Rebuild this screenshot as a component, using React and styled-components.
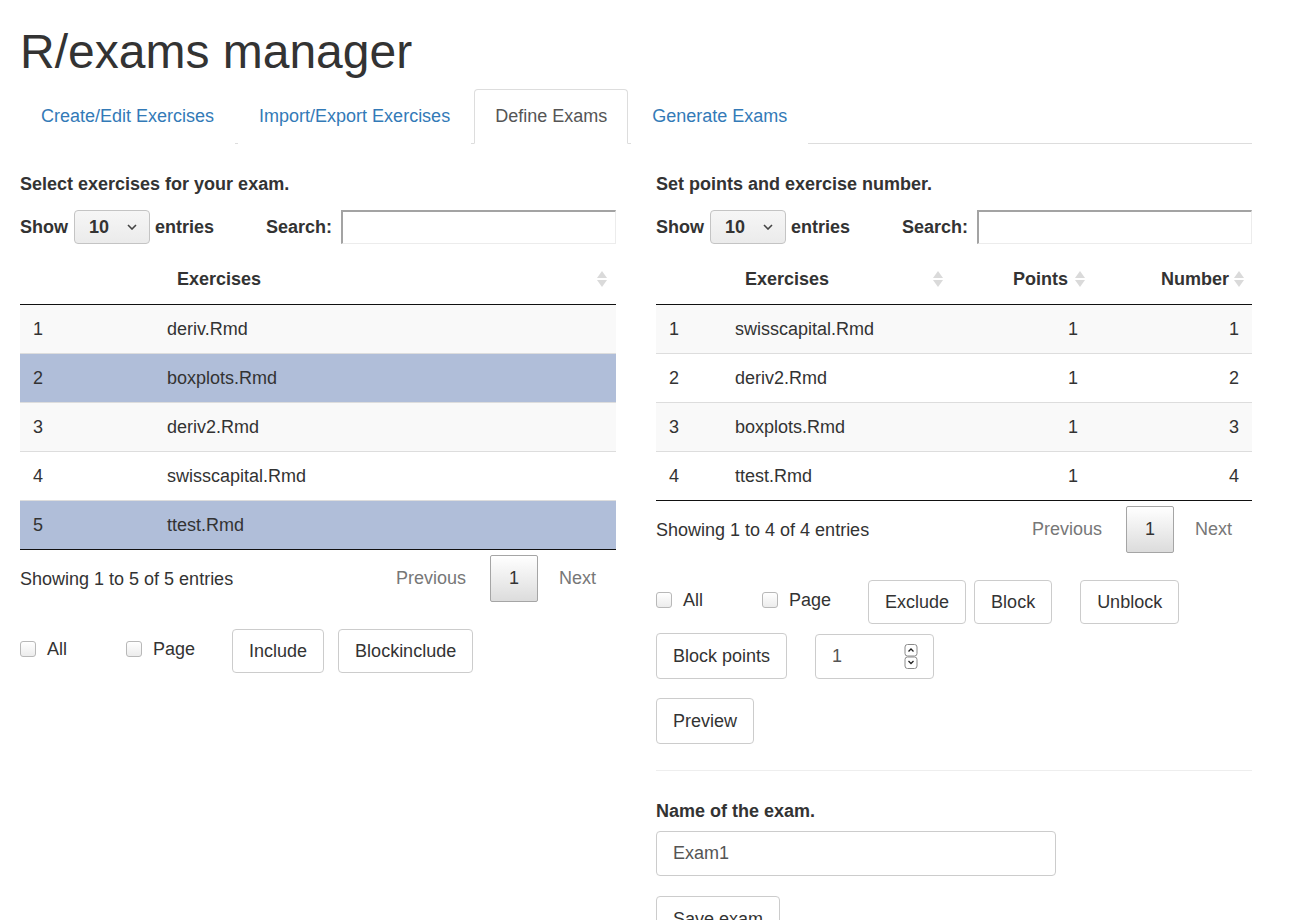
import React from "react";
import styled, { createGlobalStyle } from "styled-components";

const Global = createGlobalStyle`
  html, body { margin: 0; padding: 0; background: #fff; }
  body {
    font-family: "Liberation Sans", Arial, Helvetica, sans-serif;
    font-size: 18px;
    line-height: 26px;
    color: #333;
  }
  * { box-sizing: border-box; }
`;

const Page = styled.div`
  width: 1232px;
  margin-left: 20px;
`;

const Title = styled.h1`
  font-size: 48px;
  font-weight: 400;
  line-height: 53px;
  margin: 25px 0 11px;
  color: #333;
`;

const TabBar = styled.ul`
  display: flex;
  list-style: none;
  margin: 0;
  padding: 0;
  border-bottom: 1px solid #ddd;
`;

const Tab = styled.li`
  margin-right: 3px;
  margin-bottom: -1px;
`;

const TabLink = styled.a`
  display: block;
  padding: 13px 20px 14px;
  line-height: 26px;
  border: 1px solid ${(p) => (p.$active ? "#ddd" : "transparent")};
  border-bottom-color: ${(p) => (p.$active ? "#fff" : "transparent")};
  border-radius: 4px 4px 0 0;
  background: #fff;
  color: ${(p) => (p.$active ? "#555" : "#337ab7")};
  text-decoration: none;
  cursor: pointer;
`;

const Columns = styled.div`
  display: grid;
  grid-template-columns: 596px 596px;
  column-gap: 40px;
  padding-top: 27px;
  align-items: start;
`;

const Column = styled.div`
  display: flex;
  flex-direction: column;
`;

const Label = styled.div`
  font-weight: 700;
  line-height: 26px;
  margin-top: ${(p) => p.$mt || 0}px;
  margin-bottom: ${(p) => p.$mb || 13}px;
`;

const Controls = styled.div`
  display: flex;
  justify-content: space-between;
  align-items: center;
  height: 34px;
  font-weight: 700;
`;

const LengthGroup = styled.div`
  display: flex;
  align-items: center;
`;

const SelectWrap = styled.div`
  position: relative;
  margin: 0 5px 0 6px;
`;

const Select = styled.select`
  appearance: none;
  width: 76px;
  height: 34px;
  padding: 0 0 0 14px;
  border: 1px solid #c4c4c4;
  border-radius: 4px;
  background: linear-gradient(#f6f6f6, #ebebeb);
  font-family: inherit;
  font-size: 18px;
  font-weight: 700;
  color: #333;
`;

const Chevron = styled.svg`
  position: absolute;
  right: 13px;
  top: 14px;
  pointer-events: none;
`;

const SearchGroup = styled.label`
  display: flex;
  align-items: center;
`;

const SearchInput = styled.input`
  width: 275px;
  height: 34px;
  margin-left: 9px;
  border-style: solid;
  border-width: 2px 1px 1px 2px;
  border-color: #a3a3a3 #ececec #ececec #a3a3a3;
  font-family: inherit;
  font-size: 18px;
  padding: 0 6px;
`;

const Table = styled.table`
  width: 100%;
  margin-top: 10px;
  border-collapse: separate;
  border-spacing: 0;
  table-layout: fixed;
  border-bottom: 1px solid #111;

  tbody tr + tr td {
    border-top: 1px solid #ddd;
  }
`;

const Th = styled.th`
  position: relative;
  padding: 12px ${(p) => (p.$right ? "23px" : "10px")} 12px ${(p) => (p.$right ? "10px" : "23px")};
  line-height: 26px;
  font-weight: 700;
  text-align: ${(p) => (p.$right ? "right" : "left")};
  border-bottom: 1px solid #111;
`;

const SortIcon = styled.svg`
  position: absolute;
  right: ${(p) => p.$r || 8}px;
  top: 17px;
`;

const Tr = styled.tr`
  background: ${(p) => (p.$selected ? "#b0bed9" : p.$odd ? "#f9f9f9" : "#fff")};
`;

const Td = styled.td`
  padding: 11px 13px;
  line-height: 26px;
  text-align: ${(p) => (p.$right ? "right" : "left")};
  white-space: nowrap;
`;

const Footer = styled.div`
  display: flex;
  justify-content: space-between;
  align-items: center;
  margin-top: 5px;
`;

const Pager = styled.div`
  display: flex;
  align-items: center;
  padding-right: 1px;
`;

const PageBtn = styled.span`
  display: inline-block;
  margin-left: 2px;
  margin-right: ${(p) => p.$mr || 0}px;
  padding: 10px 18px;
  line-height: 25px;
  border: 1px solid ${(p) => (p.$current ? "#a5a5a5" : "transparent")};
  border-radius: 2px;
  color: ${(p) => (p.$current ? "#333" : "#777")};
  background: ${(p) => (p.$current ? "linear-gradient(#fff 0%, #dcdcdc 100%)" : "transparent")};
`;

const ActionRow = styled.div`
  display: flex;
  align-items: center;
  margin-top: ${(p) => p.$mt || 0}px;
`;

const CheckItem = styled.label`
  display: flex;
  align-items: center;
  margin-right: ${(p) => p.$mr}px;
  padding-bottom: 4px;
`;

const Check = styled.input`
  appearance: none;
  width: 16px;
  height: 16px;
  margin: 0 11px 0 0;
  border: 1px solid #b8b8b8;
  border-radius: 3px;
  background: linear-gradient(#fff, #ececec);
`;

const Button = styled.button`
  padding: ${(p) => (p.$tall ? "9px" : "8px")} 16px;
  margin-right: ${(p) => p.$mr || 0}px;
  line-height: 26px;
  font-family: inherit;
  font-size: 18px;
  color: #333;
  background: #fff;
  border: 1px solid #ccc;
  border-radius: 4px;
  cursor: pointer;
`;

const NumberWrap = styled.div`
  position: relative;
  width: 119px;
  height: 45px;
`;

const NumberInput = styled.input`
  width: 100%;
  height: 100%;
  padding: 0 16px;
  border: 1px solid #ccc;
  border-radius: 4px;
  font-family: inherit;
  font-size: 18px;
  color: #555;
  -moz-appearance: textfield;
  &::-webkit-inner-spin-button,
  &::-webkit-outer-spin-button {
    -webkit-appearance: none;
    margin: 0;
  }
`;

const Spinner = styled.svg`
  position: absolute;
  right: 16px;
  top: 10px;
  pointer-events: none;
`;

const Divider = styled.hr`
  width: 100%;
  margin: 26px 0 0;
  border: 0;
  border-top: 1px solid #eee;
`;

const TextInput = styled.input`
  width: 400px;
  height: 45px;
  padding: 0 16px;
  border: 1px solid #ccc;
  border-radius: 4px;
  font-family: inherit;
  font-size: 18px;
  color: #555;
`;

const SaveRow = styled.div`
  margin-top: 20px;
`;

function Sort({ r }) {
  return (
    <SortIcon $r={r} width="10" height="16" viewBox="0 0 10 16">
      <polygon points="5,0 10,7 0,7" fill="#dadada" />
      <polygon points="0,9 10,9 5,16" fill="#dadada" />
    </SortIcon>
  );
}

function LengthAndSearch() {
  return (
    <Controls>
      <LengthGroup>
        Show
        <SelectWrap>
          <Select defaultValue="10">
            <option value="10">10</option>
            <option value="25">25</option>
          </Select>
          <Chevron width="10" height="6" viewBox="0 0 10 6">
            <path d="M1 1 L5 5 L9 1" fill="none" stroke="#444" strokeWidth="1.6" />
          </Chevron>
        </SelectWrap>
        entries
      </LengthGroup>
      <SearchGroup>
        Search:
        <SearchInput type="search" />
      </SearchGroup>
    </Controls>
  );
}

function Pagination() {
  return (
    <Pager>
      <PageBtn $mr={3}>Previous</PageBtn>
      <PageBtn $current>1</PageBtn>
      <PageBtn>Next</PageBtn>
    </Pager>
  );
}

const leftRows = [
  { n: 1, name: "deriv.Rmd" },
  { n: 2, name: "boxplots.Rmd", sel: true },
  { n: 3, name: "deriv2.Rmd" },
  { n: 4, name: "swisscapital.Rmd" },
  { n: 5, name: "ttest.Rmd", sel: true },
];

const rightRows = [
  { n: 1, name: "swisscapital.Rmd", pts: 1, num: 1 },
  { n: 2, name: "deriv2.Rmd", pts: 1, num: 2 },
  { n: 3, name: "boxplots.Rmd", pts: 1, num: 3 },
  { n: 4, name: "ttest.Rmd", pts: 1, num: 4 },
];

export default function App() {
  return (
    <>
      <Global />
      <Page>
        <Title>R/exams manager</Title>
        <TabBar>
          <Tab><TabLink>Create/Edit Exercises</TabLink></Tab>
          <Tab><TabLink>Import/Export Exercises</TabLink></Tab>
          <Tab><TabLink $active>Define Exams</TabLink></Tab>
          <Tab><TabLink>Generate Exams</TabLink></Tab>
        </TabBar>
        <Columns>
          <Column>
            <Label>Select exercises for your exam.</Label>
            <LengthAndSearch />
            <Table>
              <colgroup>
                <col style={{ width: 134 }} />
                <col />
              </colgroup>
              <thead>
                <tr>
                  <Th></Th>
                  <Th>Exercises<Sort r={9} /></Th>
                </tr>
              </thead>
              <tbody>
                {leftRows.map((r, i) => (
                  <Tr key={r.n} $odd={i % 2 === 0} $selected={r.sel}>
                    <Td>{r.n}</Td>
                    <Td>{r.name}</Td>
                  </Tr>
                ))}
              </tbody>
            </Table>
            <Footer>
              <span>Showing 1 to 5 of 5 entries</span>
              <Pagination />
            </Footer>
            <ActionRow $mt={27}>
              <CheckItem $mr={59}><Check type="checkbox" />All</CheckItem>
              <CheckItem $mr={37}><Check type="checkbox" />Page</CheckItem>
              <Button $mr={14}>Include</Button>
              <Button>Blockinclude</Button>
            </ActionRow>
          </Column>
          <Column>
            <Label>Set points and exercise number.</Label>
            <LengthAndSearch />
            <Table>
              <colgroup>
                <col style={{ width: 66 }} />
                <col style={{ width: 227 }} />
                <col style={{ width: 142 }} />
                <col />
              </colgroup>
              <thead>
                <tr>
                  <Th></Th>
                  <Th>Exercises<Sort r={6} /></Th>
                  <Th $right>Points<Sort r={6} /></Th>
                  <Th $right>Number<Sort r={8} /></Th>
                </tr>
              </thead>
              <tbody>
                {rightRows.map((r, i) => (
                  <Tr key={r.n} $odd={i % 2 === 0}>
                    <Td>{r.n}</Td>
                    <Td>{r.name}</Td>
                    <Td $right>{r.pts}</Td>
                    <Td $right>{r.num}</Td>
                  </Tr>
                ))}
              </tbody>
            </Table>
            <Footer>
              <span>Showing 1 to 4 of 4 entries</span>
              <Pagination />
            </Footer>
            <ActionRow $mt={27}>
              <CheckItem $mr={59}><Check type="checkbox" />All</CheckItem>
              <CheckItem $mr={37}><Check type="checkbox" />Page</CheckItem>
              <Button $mr={8}>Exclude</Button>
              <Button $mr={28}>Block</Button>
              <Button>Unblock</Button>
            </ActionRow>
            <ActionRow $mt={9}>
              <Button $tall $mr={28}>Block points</Button>
              <NumberWrap>
                <NumberInput type="number" defaultValue={1} />
                <Spinner width="14" height="25" viewBox="0 0 14 25">
                  <rect x="1" y="0.5" width="12" height="11.5" rx="2.5" fill="#fff" stroke="#8a8a8a" />
                  <rect x="1" y="13" width="12" height="11.5" rx="2.5" fill="#fff" stroke="#8a8a8a" />
                  <path d="M4.5 7.5 L7 5 L9.5 7.5" fill="none" stroke="#222" strokeWidth="1.3" />
                  <path d="M4.5 17 L7 19.5 L9.5 17" fill="none" stroke="#222" strokeWidth="1.3" />
                </Spinner>
              </NumberWrap>
            </ActionRow>
            <ActionRow $mt={19}>
              <Button $tall>Preview</Button>
            </ActionRow>
            <Divider />
            <Label $mb={7} $mt={27}>Name of the exam.</Label>
            <TextInput type="text" defaultValue="Exam1" />
            <SaveRow>
              <Button $tall>Save exam</Button>
            </SaveRow>
          </Column>
        </Columns>
      </Page>
    </>
  );
}
